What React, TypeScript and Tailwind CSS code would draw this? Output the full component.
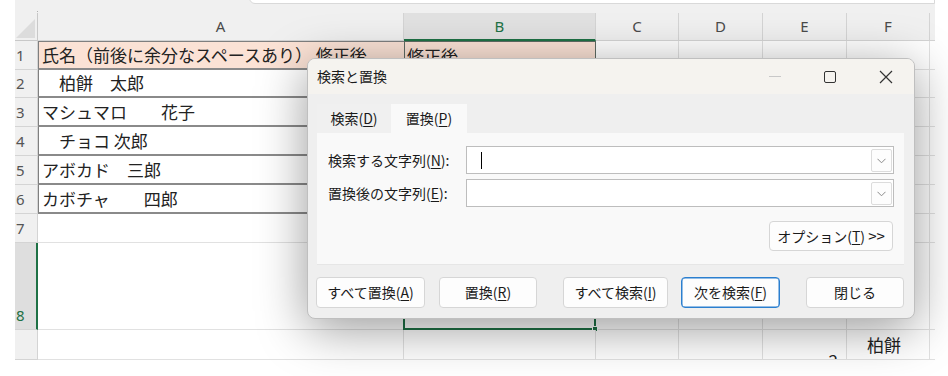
import React from "react";

const cellFont = { fontFamily: '"Noto Sans CJK JP", "Noto Sans", sans-serif' };

function U({ c }: { c: string }) {
  return <span className="underline underline-offset-2">{c}</span>;
}

function Btn({ w, children, primary }: { w: string; children: React.ReactNode; primary?: boolean }) {
  return (
    <div
      className={
        "h-[31px] rounded-[4px] bg-[#fdfdfd] flex items-center justify-center text-[14px] text-[#1a1a1a] " +
        w +
        (primary ? " border border-[#2b7fcf] shadow-[inset_0_0_0_0.5px_#2b7fcf]" : " border border-[#d6d6d6]")
      }
    >
      {children}
    </div>
  );
}

function Combo({ cursor }: { cursor?: boolean }) {
  return (
    <div className="relative h-[28px] ml-auto w-[428px] bg-white border border-[#bdbdbd] flex items-center">
      {cursor && <div className="ml-[14px] w-px h-[17px] bg-black" />}
      <div className="absolute right-[1px] top-[2px] w-[21px] h-[23px] border border-[#dcdcdc] bg-[#fdfdfd] rounded-[2px] flex items-center justify-center">
        <svg width="9" height="6" viewBox="0 0 9 6">
          <path d="M0.5 0.8 L4.5 4.8 L8.5 0.8" fill="none" stroke="#8a8a8a" strokeWidth="1" />
        </svg>
      </div>
    </div>
  );
}

export default function App() {
  const rows = [
    { n: "1", a: "氏名（前後に余分なスペースあり） 修正後", b: "修正後" },
    { n: "2", a: "　柏餅　太郎" },
    { n: "3", a: "マシュマロ　　花子" },
    { n: "4", a: "　チョコ 次郎" },
    { n: "5", a: "アボカド　三郎" },
    { n: "6", a: "カボチャ　　四郎" },
    { n: "7" },
    { n: "8" },
    { n: "" },
  ];
  const grid = "border-r border-b border-[#e1e1e1] bg-white";
  return (
    <div className="w-[948px] h-[376px] bg-white relative overflow-hidden" style={cellFont}>
      <div className="ml-[15px] w-[920px] h-[360px] bg-[#f0f0f0] flex flex-col overflow-hidden">
        {/* top strip */}
        <div className="h-[13px] shrink-0 relative">
          <div className="absolute left-[234px] right-0 top-[-10px] h-[14px] bg-white border border-[#d9d9d9] rounded-bl-[6px]" />
          <div className="absolute left-[22px] top-[11px] w-px h-px bg-[#b0b0b0]" />
        </div>
        <div
          className="grid grid-cols-[23px_366px_192px_83px_84px_84px_83px_5px] grid-rows-[28px_29px_28px_29px_29px_29px_29px_29px_87px_30px] shrink-0"
          style={{ fontFamily: '"Noto Sans", sans-serif' }}
        >
          {/* header row */}
          <div className="border-r border-b border-[#c8c8c8] bg-[#f0f0f0] relative">
            <div className="absolute right-[2px] bottom-[2px] w-0 h-0 border-l-[19px] border-l-transparent border-b-[19px] border-b-[#dcdcdc]" />
          </div>
          <div className="border-r border-b border-[#d4d4d4] bg-[#f0f0f0] flex items-center justify-center text-[15px] text-[#4a4a4a]">A</div>
          <div className="border-r border-b-2 border-r-[#d4d4d4] border-b-[#1e7145] bg-[#e1e1e1] flex items-center justify-center text-[15px] text-[#1e7145]">B</div>
          <div className="border-r border-b border-[#d4d4d4] bg-[#f0f0f0] flex items-center justify-center text-[15px] text-[#4a4a4a]">C</div>
          <div className="border-r border-b border-[#d4d4d4] bg-[#f0f0f0] flex items-center justify-center text-[15px] text-[#4a4a4a]">D</div>
          <div className="border-r border-b border-[#d4d4d4] bg-[#f0f0f0] flex items-center justify-center text-[15px] text-[#4a4a4a]">E</div>
          <div className="border-r border-b border-[#d4d4d4] bg-[#f0f0f0] flex items-center justify-center text-[15px] text-[#4a4a4a]">F</div>
          <div className="border-b border-[#d4d4d4] bg-[#f0f0f0]" />

          {rows.map((r, i) => {
            const sel = r.n === "8";
            const inTable = i < 6;
            return (
              <React.Fragment key={i}>
                <div
                  className={
                    sel
                      ? "border-r-2 border-r-[#1e7145] border-b border-b-[#d4d4d4] bg-[#dedede] flex items-end pb-[6px] text-[15px] text-[#1e7145] overflow-hidden"
                      : "border-r border-b border-[#d4d4d4] bg-[#f0f0f0] flex items-end pb-[6px] text-[15px] text-[#555] overflow-hidden"
                  }
                >
                  <span className="ml-[1px] leading-none">{r.n}</span>
                </div>
                <div
                  className={
                    inTable
                      ? "border-l border-l-[#7f7f7f] border-b-2 border-b-[#8a8a8a] flex items-center pl-[3px] text-[17px] text-[#222] whitespace-pre overflow-hidden " +
                        (i === 0 ? "bg-[#fbe2d5] border-t border-t-[#7f7f7f]" : "bg-white")
                      : grid
                  }
                  style={cellFont}
                >
                  {r.a}
                </div>
                <div
                  className={
                    i === 0
                      ? "relative bg-[#fbe2d5] border border-[#5f6b63] flex items-center pl-[2px] text-[17px] text-[#222]"
                      : "relative " + grid
                  }
                  style={cellFont}
                >
                  {r.b}
                  {sel && (
                    <div className="absolute left-[-1px] top-[-1px] right-[-1px] bottom-[-1px] border-2 border-[#1e7145]">
                      <div className="absolute right-[-4px] bottom-[-4px] w-[6px] h-[6px] bg-[#1e7145] border border-white" />
                    </div>
                  )}
                </div>
                <div className={grid} />
                <div className={grid} />
                <div className={grid + " relative overflow-hidden"} style={cellFont}>
                  {i === 8 && <span className="absolute right-[8px] top-[17px] text-[17px] text-[#222]">2</span>}
                </div>
                <div className={grid + " relative"} style={cellFont}>
                  {i === 8 && <span className="absolute left-[20px] top-[2px] text-[17px] text-[#222]">柏餅</span>}
                </div>
                <div className="border-b border-[#e1e1e1] bg-white" />
              </React.Fragment>
            );
          })}
        </div>
      </div>

      {/* dialog */}
      <div
        className="absolute left-[307px] top-[58px] w-[608px] h-[261px] rounded-[8px] bg-[#efefef] border border-[#bfbfbf] shadow-[0_10px_50px_rgba(0,0,0,0.4)] overflow-hidden flex flex-col text-[#1a1a1a]"
        style={cellFont}
      >
        <div className="h-[35px] bg-[#f5f3ef] flex items-center">
          <span className="ml-[9px] text-[14px]">検索と置換</span>
          <div className="ml-auto flex items-center">
            <div className="w-[12px] h-px bg-[#c8c8c8] mr-[43px]" />
            <div className="w-[12px] h-[12px] border border-[#333] rounded-[2px] mr-[43px]" />
            <svg width="14" height="14" viewBox="0 0 14 14" className="mr-[21px]">
              <path d="M1 1 L13 13 M13 1 L1 13" stroke="#333" strokeWidth="1.2" />
            </svg>
          </div>
        </div>
        <div className="mt-[10px] ml-[9px] flex h-[29px]">
          <div className="w-[74px] bg-[#f0f0f0] flex items-center justify-center text-[14px]">
            検索(<U c="D" />)
          </div>
          <div className="w-[76px] bg-[#f9f9f9] flex items-center justify-center text-[14px]">
            置換(<U c="P" />)
          </div>
        </div>
        <div className="ml-[9px] w-[587px] h-[132px] bg-[#f9f9f9] border-b border-[#e6e6e6] flex flex-col pt-[13px] pr-[10px] pl-[11px]">
          <div className="flex items-center h-[28px] text-[14px]">
            <span>
              検索する文字列(<U c="N" />):
            </span>
            <Combo cursor />
          </div>
          <div className="flex items-center h-[28px] mt-[5px] text-[14px]">
            <span>
              置換後の文字列(<U c="E" />):
            </span>
            <Combo />
          </div>
          <div className="flex mt-[14px] justify-end">
            <div className="w-[124px] h-[30px] rounded-[4px] bg-[#fdfdfd] border border-[#d6d6d6] flex items-center justify-center text-[14px] mr-[1px]">
              オプション(<U c="T" />)&nbsp;<span className="text-[15px]">&gt;&gt;</span>
            </div>
          </div>
        </div>
        <div className="flex mt-[12px] ml-[8px]">
          <Btn w="w-[109px]">
            すべて置換(<U c="A" />)
          </Btn>
          <div className="w-[14px]" />
          <Btn w="w-[98px]">
            置換(<U c="R" />)
          </Btn>
          <div className="w-[26px]" />
          <Btn w="w-[105px]">
            すべて検索(<U c="I" />)
          </Btn>
          <div className="w-[13px]" />
          <Btn w="w-[99px]" primary>
            次を検索(<U c="F" />)
          </Btn>
          <div className="w-[26px]" />
          <Btn w="w-[98px]">閉じる</Btn>
        </div>
      </div>
    </div>
  );
}
